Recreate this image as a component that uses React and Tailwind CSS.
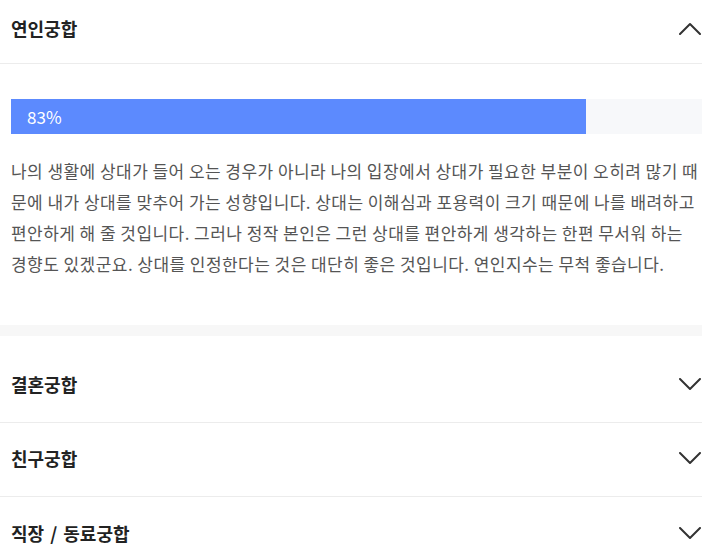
import React from 'react';

const font = { fontFamily: '"Noto Sans CJK KR", "Noto Sans", sans-serif' };

const Chevron = ({ up }) => (
  <svg width="22" height="13" viewBox="0 0 22 13" fill="none" className="shrink-0 mr-[1px]">
    <path
      d={up ? 'M1 12L11 2L21 12' : 'M1 1L11 11L21 1'}
      stroke="#333"
      strokeWidth="2"
      strokeLinecap="round"
      strokeLinejoin="round"
    />
  </svg>
);

const sections = ['결혼궁합', '친구궁합', '직장 / 동료궁합'];

export default function App() {
  const score = 83;
  return (
    <div className="w-[702px] h-[552px] overflow-hidden bg-white" style={font}>
      {/* 연인궁합 open */}
      <div className="h-[64px] flex items-center justify-between pl-[11px] pb-[7px] border-b border-[#ececec]">
        <span className="text-[18px] font-bold text-[#222]">연인궁합</span>
        <Chevron up />
      </div>
      <div className="pl-[11px] pt-[35px] pb-[46px]">
        <div className="h-[35px] bg-[#f7f8fa] w-[693px]">
          <div
            className="h-full bg-[#5c8afe] flex items-center pl-[16px] text-white text-[17px]"
            style={{ width: `${score}%` }}
          >
            {score}%
          </div>
        </div>
        <p className="mt-[21px] text-[17px] leading-[31px] text-[#555] whitespace-nowrap tracking-[0.45px]">
          나의 생활에 상대가 들어 오는 경우가 아니라 나의 입장에서 상대가 필요한 부분이 오히려 많기 때
          <br />
          문에 내가 상대를 맞추어 가는 성향입니다. 상대는 이해심과 포용력이 크기 때문에 나를 배려하고
          <br />
          편안하게 해 줄 것입니다. 그러나 정작 본인은 그런 상대를 편안하게 생각하는 한편 무서워 하는
          <br />
          경향도 있겠군요. 상대를 인정한다는 것은 대단히 좋은 것입니다. 연인지수는 무척 좋습니다.
        </p>
      </div>
      <div className="h-[11px] bg-[#f7f7f7]" />
      <div className="pt-[13px]">
        {sections.map((title, i) => (
          <div
            key={title}
            className={`h-[74px] flex items-center justify-between pl-[11px] pb-[2px] ${
              i < sections.length - 1 ? 'border-b border-[#ececec]' : ''
            }`}
          >
            <span className="text-[18px] font-bold text-[#222] [word-spacing:2px]">{title}</span>
            <Chevron />
          </div>
        ))}
      </div>
    </div>
  );
}
